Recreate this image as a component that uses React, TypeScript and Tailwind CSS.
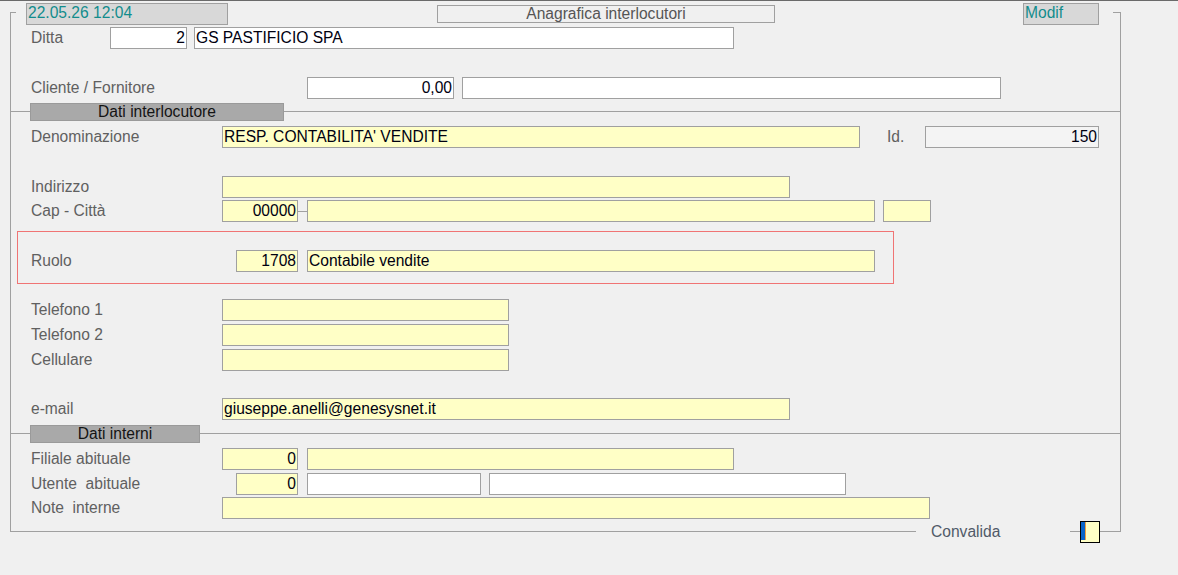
import React from "react";

const font = { fontFamily: '"Liberation Sans", Arial, sans-serif' };

function Box({
  className,
  children,
  right,
}: {
  className: string;
  children?: React.ReactNode;
  right?: boolean;
}) {
  return (
    <div
      className={
        "h-[22px] shrink-0 border border-[#a0a0a0] flex items-center px-[1px] pb-[1px] text-[15.6px] leading-none text-[#000010] whitespace-nowrap overflow-hidden " +
        (right ? "justify-end " : "justify-start ") +
        className
      }
    >
      {children}
    </div>
  );
}

function Label({ className, children }: { className: string; children: React.ReactNode }) {
  return (
    <div className={"shrink-0 text-[15.6px] leading-none pb-[1px] text-[#606060] whitespace-nowrap " + className}>
      {children}
    </div>
  );
}

function Section({ title, boxW }: { title: string; boxW: string }) {
  return (
    <div className="flex items-start h-[18px]">
      <div className="w-[19px] h-px mt-[8px] bg-[#a0a0a0] shrink-0" />
      <div
        className={
          "h-[18px] shrink-0 bg-[#a9a9a9] border border-[#9a9a9a] flex items-center justify-center pb-[1px] text-[15.6px] leading-none text-[#141414] " +
          boxW
        }
      >
        {title}
      </div>
      <div className="flex-1 h-px mt-[8px] bg-[#a0a0a0]" />
    </div>
  );
}

export default function App() {
  return (
    <div className="w-[1178px] h-[575px] bg-[#f0f0f0] overflow-hidden" style={font}>
      <div className="h-px bg-[#6a6a6a]" />
      <div className="ml-[10px] mt-[11px] w-[1111px] border-x border-[#a0a0a0] flex flex-col">
        {/* header */}
        <div className="flex items-start h-[22px] mt-[-9px]">
          <div className="w-[5px] h-px mt-[9px] bg-[#a0a0a0] shrink-0" />
          <div className="ml-[10px] w-[202px] h-[22px] bg-[#d8d8d8] border border-[#a0a0a0] flex items-center px-[1px] pb-[2px] text-[15.6px] leading-none text-[#128c8c] shrink-0">
            22.05.26 12:04
          </div>
          <div className="ml-[209px] mt-[2px] w-[338px] h-[18px] border border-[#a0a0a0] flex items-center justify-center pb-[1px] text-[15.6px] leading-none text-[#555555] shrink-0">
            Anagrafica interlocutori
          </div>
          <div className="ml-[248px] w-[76px] h-[22px] bg-[#d8d8d8] border border-[#a0a0a0] flex items-center px-[1px] pb-[2px] text-[15.6px] leading-none text-[#128c8c] shrink-0">
            Modif
          </div>
          <div className="ml-[14px] w-[7px] h-px mt-[9px] bg-[#a0a0a0] shrink-0" />
        </div>

        {/* Ditta */}
        <div className="flex items-center mt-[2px] pl-[20px]">
          <Label className="w-[79px]">Ditta</Label>
          <Box className="w-[77px] bg-white" right>
            2
          </Box>
          <Box className="ml-[7px] w-[540px] bg-white">GS PASTIFICIO SPA</Box>
        </div>

        {/* Cliente */}
        <div className="flex items-center mt-[28px] pl-[20px]">
          <Label className="w-[276px]">Cliente / Fornitore</Label>
          <Box className="w-[147px] bg-white" right>
            0,00
          </Box>
          <Box className="ml-[8px] w-[539px] bg-white" />
        </div>

        <div className="mt-[4px]">
          <Section title="Dati interlocutore" boxW="w-[254px]" />
        </div>

        {/* Denominazione */}
        <div className="flex items-center mt-[5px] pl-[20px]">
          <Label className="w-[191px]">Denominazione</Label>
          <Box className="w-[638px] bg-[#ffffc6]">RESP. CONTABILITA' VENDITE</Box>
          <Label className="ml-[27px] w-[38px]">Id.</Label>
          <Box className="w-[174px] bg-[#f4f4f4]" right>
            150
          </Box>
        </div>

        {/* Indirizzo */}
        <div className="flex items-center mt-[28px] pl-[20px]">
          <Label className="w-[191px]">Indirizzo</Label>
          <Box className="w-[568px] bg-[#ffffc6]" />
        </div>

        {/* Cap */}
        <div className="flex items-center mt-[2px] pl-[20px]">
          <Label className="w-[191px]">Cap - Città</Label>
          <Box className="w-[76px] bg-[#ffffc6]" right>
            00000
          </Box>
          <div className="w-[9px] h-px bg-[#a0a0a0] shrink-0" />
          <Box className="w-[568px] bg-[#ffffc6]" />
          <Box className="ml-[8px] w-[48px] bg-[#ffffc6]" />
        </div>

        {/* Ruolo (red box) */}
        <div className="ml-[6px] mt-[9px] w-[877px] h-[53px] border border-[#f07474] pt-[18px]">
          <div className="flex items-center pl-[13px]">
            <Label className="w-[205px]">Ruolo</Label>
            <Box className="w-[62px] bg-[#ffffc6]" right>
              1708
            </Box>
            <Box className="ml-[9px] w-[568px] bg-[#ffffc6]">Contabile vendite</Box>
          </div>
        </div>

        {/* Telefoni */}
        <div className="flex items-center mt-[15px] pl-[20px]">
          <Label className="w-[191px]">Telefono 1</Label>
          <Box className="w-[287px] bg-[#ffffc6]" />
        </div>
        <div className="flex items-center mt-[3px] pl-[20px]">
          <Label className="w-[191px]">Telefono 2</Label>
          <Box className="w-[287px] bg-[#ffffc6]" />
        </div>
        <div className="flex items-center mt-[3px] pl-[20px]">
          <Label className="w-[191px]">Cellulare</Label>
          <Box className="w-[287px] bg-[#ffffc6]" />
        </div>

        {/* e-mail */}
        <div className="flex items-center mt-[27px] pl-[20px]">
          <Label className="w-[191px]">e-mail</Label>
          <Box className="w-[568px] bg-[#ffffc6]">giuseppe.anelli@genesysnet.it</Box>
        </div>

        <div className="mt-[5px]">
          <Section title="Dati interni" boxW="w-[170px]" />
        </div>

        {/* Filiale */}
        <div className="flex items-center mt-[5px] pl-[20px]">
          <Label className="w-[191px]">Filiale abituale</Label>
          <Box className="w-[76px] bg-[#ffffc6]" right>
            0
          </Box>
          <Box className="ml-[9px] w-[427px] bg-[#ffffc6]" />
        </div>

        {/* Utente */}
        <div className="flex items-center mt-[3px] pl-[20px]">
          <Label className="w-[205px] whitespace-pre">Utente  abituale</Label>
          <Box className="w-[62px] bg-[#ffffc6]" right>
            0
          </Box>
          <Box className="ml-[9px] w-[174px] bg-white" />
          <Box className="ml-[8px] w-[357px] bg-white" />
        </div>

        {/* Note */}
        <div className="flex items-center mt-[2px] pl-[20px]">
          <Label className="w-[191px] whitespace-pre">Note  interne</Label>
          <Box className="w-[708px] bg-[#ffffc6]" />
        </div>

        {/* bottom line */}
        <div className="flex items-center h-px mt-[12px]">
          <div className="w-[905px] h-px bg-[#a0a0a0] shrink-0" />
          <div className="w-[154px] shrink-0 pl-[15px] text-[15.6px] leading-none text-[#505a68]">Convalida</div>
          <div className="w-[10px] h-px bg-[#a0a0a0] shrink-0" />
          <div className="w-[20px] h-[22px] shrink-0 border border-black bg-[#ffffc6] flex items-start">
            <div className="w-[4px] h-[18px] bg-[#0a64c8] border-r border-[#f0a040] box-content" />
          </div>
          <div className="flex-1 h-px bg-[#a0a0a0]" />
        </div>
      </div>
    </div>
  );
}
